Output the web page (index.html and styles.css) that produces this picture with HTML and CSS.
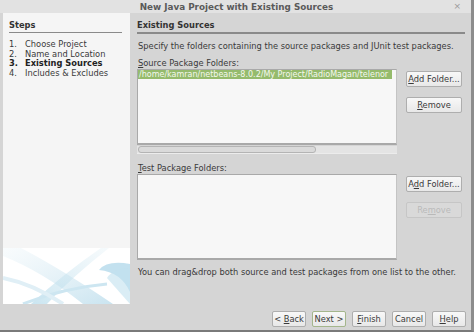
FILE: index.html
```html
<!DOCTYPE html>
<html lang="en">
<head>
    <meta charset="UTF-8">
    <title>New Java Project with Existing Sources</title>
    <link rel="stylesheet" href="styles.css">
</head>
<body>
    <div class="dialog">
        <div class="titlebar">
            <span class="title">New Java Project with Existing Sources</span>
            <span class="close">&#215;</span>
        </div>
        <div class="main">
            <div class="steps">
                <div class="steps-list">
                    <div class="steps-header">Steps</div>
                    <ol>
                        <li><span class="num">1.</span>Choose Project</li>
                        <li><span class="num">2.</span>Name and Location</li>
                        <li class="current"><span class="num">3.</span>Existing Sources</li>
                        <li><span class="num">4.</span>Includes &amp; Excludes</li>
                    </ol>
                </div>
                <div class="steps-image">
                    <svg width="127" height="56" viewBox="0 0 127 56">
                        <defs>
                            <linearGradient id="g1" x1="0" y1="0" x2="1" y2="1">
                                <stop offset="0" stop-color="#c8e2ee" stop-opacity="0.2"/>
                                <stop offset="1" stop-color="#9ccde3" stop-opacity="0.9"/>
                            </linearGradient>
                            <linearGradient id="g2" x1="1" y1="0" x2="0" y2="1">
                                <stop offset="0" stop-color="#d8ebf3" stop-opacity="0.3"/>
                                <stop offset="1" stop-color="#b5dbeb" stop-opacity="0.9"/>
                            </linearGradient>
                        </defs>
                        <rect width="127" height="56" fill="#ffffff"/>
                        <path d="M0 0 L18 0 Q60 22 110 56 L80 56 Q40 24 0 8 Z" fill="url(#g1)" opacity="0.6"/>
                        <path d="M98 0 L106 0 Q70 28 44 56 L28 56 Q60 26 98 0 Z" fill="url(#g2)" opacity="0.8"/>
                        <path d="M127 16 Q104 12 96 22 Q118 24 127 44 Z" fill="#a9d4e8" opacity="0.7"/>
                        <path d="M127 20 Q110 20 104 30 L127 56 Z" fill="#c2e1ef" opacity="0.6"/>
                        <path d="M20 56 Q60 40 104 36" stroke="#cde6f1" stroke-width="3" fill="none"/>
                        <path d="M0 30 Q30 36 60 56" stroke="#e0eff6" stroke-width="4" fill="none"/>
                    </svg>
                </div>
            </div>
            <div class="content">
                <div class="content-header">Existing Sources</div>
                <p class="desc">Specify the folders containing the source packages and JUnit test packages.</p>
                <div class="field-label"><u>S</u>ource Package Folders:</div>
                <div class="folder-row">
                    <div class="list-wrap">
                        <div class="list list-source">
                            <div class="list-item selected">/home/kamran/netbeans-8.0.2/My Project/RadioMagan/telenor</div>
                        </div>
                        <div class="hscroll"><div class="thumb"></div></div>
                    </div>
                    <div class="side-buttons">
                        <button class="btn"><u>A</u>dd Folder...</button>
                        <button class="btn"><u>R</u>emove</button>
                    </div>
                </div>
                <div class="field-label test-label"><u>T</u>est Package Folders:</div>
                <div class="folder-row">
                    <div class="list-wrap">
                        <div class="list list-test"></div>
                    </div>
                    <div class="side-buttons">
                        <button class="btn">A<u>d</u>d Folder...</button>
                        <button class="btn" disabled>Re<u>m</u>ove</button>
                    </div>
                </div>
                <p class="note">You can drag&amp;drop both source and test packages from one list to the other.</p>
            </div>
        </div>
        <div class="button-bar">
            <button class="btn">&lt; <u>B</u>ack</button>
            <button class="btn default">Next &gt;</button>
            <button class="btn"><u>F</u>inish</button>
            <button class="btn">Cancel</button>
            <button class="btn"><u>H</u>elp</button>
        </div>
    </div>
</body>
</html>
```

FILE: styles.css
```css
body {
    margin: 0;
    font-family: "DejaVu Sans", sans-serif;
    font-size: 8.3px;
    color: #3a3a3a;
    background-color: #d5d5d5;
}
.dialog {
    width: 471px;
    height: 330px;
    display: flex;
    flex-direction: column;
    border-right: 3px solid #8c8c8c;
    border-bottom: 2px solid #7a7a7a;
    background-color: #d5d5d5;
}
.titlebar {
    height: 13px;
    background-color: #e2e2e2;
    display: flex;
    align-items: center;
    justify-content: center;
    position: relative;
}
.title {
    font-weight: bold;
    font-size: 8.8px;
    color: #5a5a5a;
    margin-left: 2px;
}
.close {
    position: absolute;
    right: 10px;
    top: 0;
    line-height: 13px;
    color: #9a9a9a;
    font-size: 9px;
}
.main {
    display: flex;
    flex: 1;
}
.steps {
    width: 127px;
    margin-left: 3px;
    display: flex;
    flex-direction: column;
}
.steps-list {
    flex: 1;
    background-color: #f5f5f5;
    padding: 7px 8px 0 6px;
}
.steps-header {
    font-weight: bold;
    color: #333;
    padding-bottom: 2px;
    border-bottom: 1px solid #8a8a8a;
    margin-bottom: 7px;
}
ol {
    list-style: none;
    margin: 0;
    padding: 0;
}
li {
    line-height: 9.6px;
}
.num {
    display: inline-block;
    width: 16px;
}
li.current {
    font-weight: bold;
    color: #222;
}
.steps-image {
    height: 56px;
}
.steps-image svg {
    display: block;
}
.content {
    flex: 1;
    margin-left: 7px;
    margin-right: 6px;
    padding-top: 7px;
}
.content-header {
    font-weight: bold;
    color: #333;
    padding-bottom: 2px;
    border-bottom: 2px solid #8a8a8a;
}
.desc {
    margin: 7px 0 0 1px;
    line-height: 10px;
}
.field-label {
    margin: 7px 0 0 1px;
    line-height: 10px;
}
.test-label {
    margin-top: 9px;
}
.folder-row {
    display: flex;
    margin-top: 1px;
}
.list-wrap {
    width: 260px;
}
.list {
    background-color: #f7f7f7;
    border: 1px solid #a9a9a9;
    border-right-color: #c4c4c4;
    border-bottom-width: 2px;
    box-sizing: border-box;
    overflow: hidden;
}
.list-source {
    height: 76px;
}
.list-test {
    height: 86px;
}
.list-item {
    white-space: nowrap;
    font-size: 8px;
    line-height: 9px;
    padding-left: 1px;
}
.list-item.selected {
    background-color: #95bb6c;
    color: #f4f8ef;
    width: 253px;
}
.hscroll {
    height: 7px;
    margin-top: 1px;
    background-color: #e4e4e4;
    border-bottom: 1px solid #ececec;
}
.thumb {
    width: 176px;
    height: 5px;
    margin-left: 1px;
    border: 1px solid #b4b4b4;
    border-radius: 3px;
    background-color: #dadada;
}
.side-buttons {
    display: flex;
    flex-direction: column;
    gap: 10px;
    margin-left: 9px;
    padding-top: 2px;
}
.btn {
    font-family: "DejaVu Sans", sans-serif;
    font-size: 8.3px;
    color: #3a3a3a;
    height: 16px;
    padding: 0;
    white-space: nowrap;
    border: 1px solid #aeaeae;
    border-radius: 2px;
    background: linear-gradient(#f8f8f8, #e8e8e8);
    cursor: pointer;
}
.side-buttons .btn {
    width: 56px;
}
.btn:disabled {
    color: #b9b9b9;
    border-color: #c6c6c6;
    background: #d9d9d9;
    cursor: default;
}
.btn.default {
    border-color: #a4b68c;
}
.note {
    margin: 7px 0 0 1px;
    line-height: 10px;
}
.button-bar {
    height: 26px;
    display: flex;
    justify-content: flex-end;
    align-items: center;
    gap: 6px;
    padding-right: 5px;
    padding-top: 3px;
    box-sizing: border-box;
}
.button-bar .btn {
    width: 34px;
}
```
